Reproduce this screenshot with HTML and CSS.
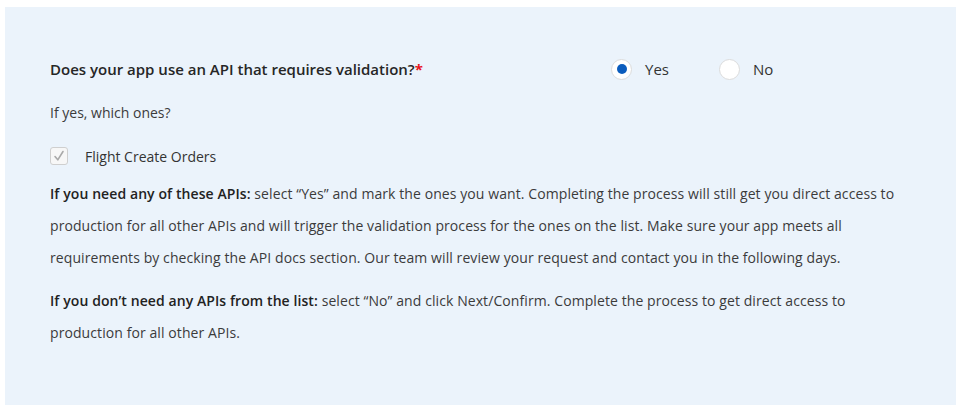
FILE: index.html
```html
<!DOCTYPE html>
<html lang="en">
<head>
<meta charset="utf-8">
<title>API validation</title>
<link rel="stylesheet" href="styles.css">
</head>
<body>
<div class="panel">
  <div class="question-row">
    <div class="question">Does your app use an API that requires validation?<span class="req">*</span></div>
    <div class="radios">
      <label class="radio"><span class="radio-circle checked"></span><span class="radio-label">Yes</span></label>
      <label class="radio"><span class="radio-circle"></span><span class="radio-label">No</span></label>
    </div>
  </div>
  <div class="sub">If yes, which ones?</div>
  <label class="check-row">
    <span class="checkbox"><svg width="14" height="14" viewBox="0 0 14 14"><path d="M3 7.5 L5.8 10.8 L11 2.5" fill="none" stroke="#a9a9a9" stroke-width="1.6" stroke-linecap="round" stroke-linejoin="round"/></svg></span>
    <span class="check-label">Flight Create Orders</span>
  </label>
  <p class="info"><strong>If you need any of these APIs:</strong> select “Yes” and mark the ones you want. Completing the process will still get you direct access to production for all other APIs and will trigger the validation process for the ones on the list. Make sure your app meets all requirements by checking the API docs section. Our team will review your request and contact you in the following days.</p>
  <p class="info"><strong>If you don’t need any APIs from the list:</strong> select “No” and click Next/Confirm. Complete the process to get direct access to production for all other APIs.</p>
</div>
</body>
</html>
```
FILE: styles.css
```css
* { box-sizing: border-box; }
html, body { margin: 0; padding: 0; background: #ffffff; }
body {
  font-family: "Open Sans", "Noto Sans", sans-serif;
  color: #3b3b3b;
  font-size: 14px;
}
.panel {
  margin: 7px 0 0 5px;
  width: 951px;
  height: 398px;
  background: #ebf3fb;
  padding: 50px 45px 0 45px;
}
.question-row {
  display: flex;
  align-items: center;
  height: 24px;
}
.question {
  width: 561px;
  font-size: 15px;
  font-weight: 600;
  color: #262626;
  line-height: 24px;
}
.req { color: #e8141b; font-weight: 700; }
.radios { display: flex; align-items: center; }
.radio { display: flex; align-items: center; width: 108px; }
.radio-circle {
  width: 21px; height: 21px;
  border-radius: 50%;
  background: #ffffff;
  border: 1px solid #dcdcdc;
  display: flex; align-items: center; justify-content: center;
}
.radio-circle.checked::after {
  content: "";
  width: 10px; height: 10px;
  border-radius: 50%;
  background: #0b5cbd;
}
.radio-label { margin-left: 13px; font-size: 15px; color: #333; line-height: 24px; }
.sub {
  margin-top: 20px;
  line-height: 24px;
  color: #3b3b3b;
}
.check-row {
  display: flex;
  align-items: center;
  margin-top: 19px;
  height: 24px;
}
.checkbox {
  width: 18px; height: 18px;
  border: 1px solid #cfcfcf;
  border-radius: 3px;
  background: #f7f7f7;
  display: flex; align-items: center; justify-content: center;
}
.check-label { margin-left: 17px; color: #333; }
.info {
  margin: 10px 0 0 0;
  max-width: 845px;
  line-height: 32px;
  color: #3b3b3b;
  letter-spacing: 0.006em;
}
.info + .info { margin-top: 11px; }
.info strong { font-weight: 600; color: #222; }
```
